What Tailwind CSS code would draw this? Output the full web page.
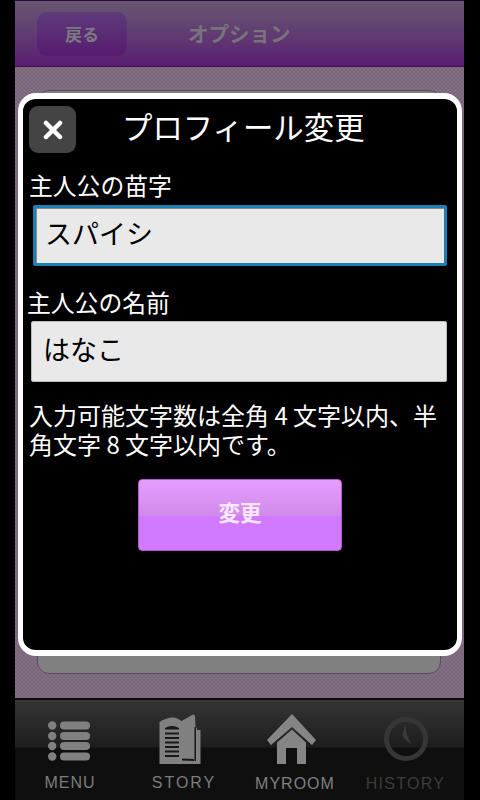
<!DOCTYPE html>
<html lang="ja">
<head>
<meta charset="utf-8">
<title>プロフィール変更</title>
<script src="https://cdn.jsdelivr.net/npm/@tailwindcss/browser@4"></script>
</head>
<body class="bg-black">
<div class="relative w-[480px] h-[800px] overflow-hidden bg-black font-['Noto_Sans_CJK_JP','Liberation_Sans',sans-serif]">
  <div class="ml-[15px] w-[449px] h-[800px] flex flex-col">

    <!-- header -->
    <header class="h-[67px] shrink-0 flex items-center border-t border-b border-t-[#2a0b3a] border-b-[#3c1150] bg-gradient-to-b from-[#675670] to-[#5a1c72]">
      <div class="ml-[22px] w-[90px] h-[44px] rounded-[10px] bg-gradient-to-b from-[#5e3a7a] to-[#561a70] flex items-center justify-center text-[17px] font-bold text-[#7c7a80]">戻る</div>
      <div class="ml-[61px] text-[20.5px] font-bold text-[#77747c]">オプション</div>
    </header>

    <!-- page behind the dialog -->
    <main class="flex-1 px-[22px] pt-[23px] pb-[24px] bg-[repeating-conic-gradient(#836e84_0_25%,#786679_0_50%)] bg-[length:4px_4px]">
      <div class="h-full w-[404px] rounded-[12px] bg-[#808080] border border-[#5d4a60]"></div>
    </main>

    <!-- tab bar -->
    <nav class="h-[102px] shrink-0 flex border-t-2 border-t-[#0c0c0c] bg-[linear-gradient(#3a3a3a,#343434_2px,#1d1d1d_47px,#0f0f0f_48px,#0f0f0f)] text-[16px] font-['Liberation_Sans',sans-serif] tracking-[1px]">
      <div class="w-[110px] flex flex-col items-center">
        <svg class="mt-[21px] mr-[2px] w-[42px] h-[40px] text-[#808080]" viewBox="0 0 42 40" fill="currentColor">
          <circle cx="4.200" cy="4.500" r="4.200"/><rect x="12" y="0.500" width="30" height="8" rx="4"/>
          <circle cx="4.200" cy="15" r="4.200"/><rect x="12" y="11" width="30" height="8" rx="4"/>
          <circle cx="4.200" cy="25" r="4.200"/><rect x="12" y="21" width="30" height="8" rx="4"/>
          <circle cx="4.200" cy="35.500" r="4.200"/><rect x="12" y="31.500" width="30" height="8" rx="4"/>
        </svg>
        <span class="mt-[10px] text-[#7c7c7c]">MENU</span>
      </div>
      <div class="w-[118px] flex flex-col items-center">
        <svg class="mt-[14px] mr-[8px] w-[42px] h-[50px] text-[#808080]" viewBox="0 0 42 50" fill="currentColor">
          <path d="M0.500 8Q8 3 15 3.500Q19 4 22.500 7L34 0.500 36 1.500 36.500 13 38 14V16H41.500V50H0.500Z"/>
          <g fill="#171717">
            <path d="M6 14Q13 10 20 14V15.500H6Z"/>
            <rect x="6" y="18.500" width="14" height="2"/><rect x="6" y="23" width="14" height="2"/>
            <rect x="6" y="27.500" width="14" height="2"/><rect x="6" y="32" width="14" height="2"/>
            <rect x="6" y="36.500" width="14" height="2"/><rect x="6" y="41" width="14" height="2"/>
            <path d="M23 44.500 35 45V47L23 46.500Z"/>
            <rect x="35.500" y="13" width="1.500" height="34"/>
          </g>
        </svg>
        <span class="mt-[7px] tracking-[2px] text-[#7c7c7c]">STORY</span>
      </div>
      <div class="w-[104px] flex flex-col items-center">
        <svg class="mt-[14px] mr-[7px] w-[50px] h-[50px] text-[#858585]" viewBox="0 0 50 50" fill="currentColor">
          <path d="M25 0 49 26 45 31 25 13 4 31 0 26Z"/>
          <path d="M25 15.500 39 28.500V50H30V34H19V50H10V28.500Z"/>
        </svg>
        <span class="mt-[8px] text-[#808080]">MYROOM</span>
      </div>
      <div class="w-[117px] flex flex-col items-center">
        <svg class="mt-[17px] w-[44px] h-[44px]" viewBox="0 0 44 44">
          <circle cx="22" cy="22" r="19.500" fill="none" stroke="#363636" stroke-width="5"/>
          <path d="M21 8 18.500 18Q20 23 28 27.500Q24 22 23 17Z" fill="#3a3a3a"/>
        </svg>
        <span class="mt-[11px] tracking-[1.3px] text-[#3c3c3c]">HISTORY</span>
      </div>
    </nav>
  </div>

  <!-- dialog -->
  <section class="absolute left-[18px] top-[93px] w-[444px] h-[563px] rounded-[18px] border-x-[5px] border-y-[6px] border-white bg-black text-white">
    <div class="flex items-center pl-[6px] pt-[7px]">
      <button class="w-[47px] h-[47px] rounded-[9px] bg-[#444] flex items-center justify-center">
        <svg class="w-[20px] h-[20px]" viewBox="0 0 20 20"><path d="M3 3 17 17M17 3 3 17" stroke="#fff" stroke-width="4.500" stroke-linecap="round"/></svg>
      </button>
      <h1 class="ml-[46px] pb-[6px] text-[30.4px] leading-[41px] font-normal">プロフィール変更</h1>
    </div>

    <label class="block ml-[6px] mt-[15px] text-[23.8px] leading-[34px]">主人公の苗字</label>
    <input class="block ml-[10px] mt-[3px] w-[414px] h-[61px] pl-[9px] pb-[6px] border-[3px] border-[#1b7fb4] bg-[#e9e9e9] shadow-[inset_1px_1px_0_#8a8a8a] rounded-[2px] text-[27px] text-black outline-none" type="text" value="スパイシ">

    <label class="block ml-[4px] mt-[19px] text-[23.8px] leading-[34px]">主人公の名前</label>
    <input class="block ml-[8px] mt-[2px] w-[416px] h-[61px] pl-[11px] pb-[6px] border border-[#b8bcc0] bg-[#e9e9e9] rounded-[2px] text-[27px] text-black outline-none" type="text" value="はなこ">

    <p class="ml-[6px] mt-[18px] w-[412px] text-[24px] leading-[29px]">入力可能文字数は全角 4 文字以内、半角文字 8 文字以内です。</p>

    <button class="block ml-[115px] mt-[21px] w-[204px] h-[72px] pb-[5px] rounded-[4px] border border-[#b455d8] bg-[linear-gradient(#e59dff,#d08ae8_36px,#d27aff_36px,#d27aff)] text-[21.5px] font-bold text-[#f8e8ff]">変更</button>
  </section>
</div>
</body>
</html>
